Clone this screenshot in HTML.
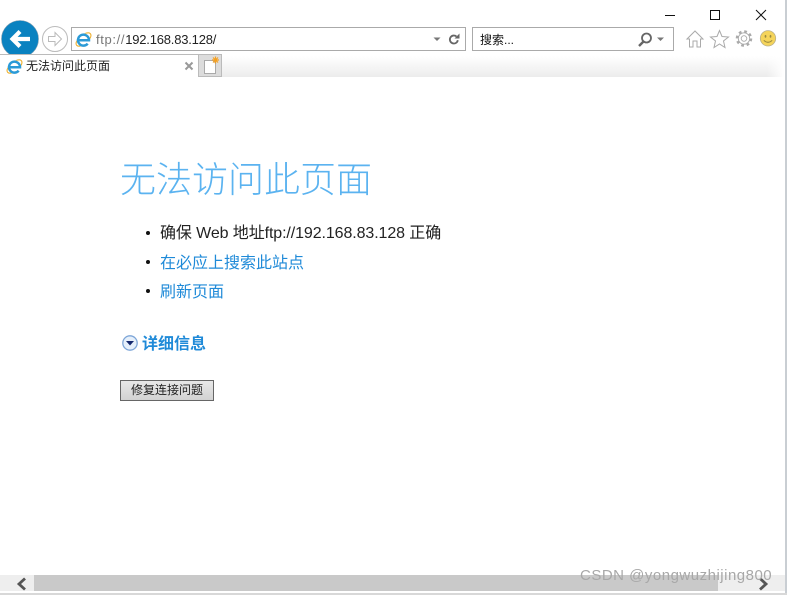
<!DOCTYPE html>
<html lang="zh">
<head>
<meta charset="utf-8">
<style>
html,body{margin:0;padding:0;background:#fff;}
body{width:787px;height:595px;position:relative;overflow:hidden;font-family:"Liberation Sans","Noto Sans CJK SC",sans-serif;}
.a{position:absolute;white-space:nowrap;line-height:1;}
.box{position:absolute;box-sizing:border-box;background:#fff;border:1px solid #aaa;}
svg{position:absolute;overflow:visible;}
</style>
</head>
<body>
<!-- window edge -->
<div class="a" style="left:785px;top:0;width:2px;height:595px;background:#c9ced3"></div>
<div class="a" style="left:0;top:593px;width:787px;height:2px;background:#d8d8d8"></div>

<!-- window controls -->
<svg style="left:660px;top:8px" width="115" height="14" viewBox="0 0 115 14">
<path d="M5 7.500H15" stroke="#111" stroke-width="1" fill="none"/>
<rect x="50.500" y="2.500" width="9" height="9" stroke="#111" fill="none"/>
<path d="M96 2L106 12M106 2L96 12" stroke="#111" stroke-width="1" fill="none"/>
</svg>

<!-- back button -->
<svg style="left:0;top:19px" width="70" height="38" viewBox="0 0 70 38">
<circle cx="20" cy="20" r="18.500" fill="#0a82c0" stroke="#7b9bb0" stroke-width=".6"/>
<path d="M30 20H13M20 12.500L12.500 20L20 27.500" stroke="#fff" stroke-width="4.200" fill="none"/>
<circle cx="55" cy="20" r="12.500" fill="#fff" stroke="#bbb" stroke-width="1"/>
<path d="M48.500 17.500H55V13.500L61.500 20L55 26.500V22.500H48.500Z" fill="none" stroke="#bbb" stroke-width="1"/>
</svg>

<!-- address bar -->
<div class="box" style="left:71px;top:27px;width:395px;height:24px"></div>
<svg style="left:75px;top:31px" width="17" height="17" viewBox="0 0 17 17">
<ellipse cx="8.500" cy="8.500" rx="9" ry="4.300" transform="rotate(-40 8.500 8.500)" fill="none" stroke="#eeb030" stroke-width="1.100"/>
<circle cx="8.500" cy="9" r="6.800" fill="#fff"/>
<path d="M3 9.300H14A5.500 5.500 0 1 0 12.700 12.700" stroke="#2b9ad6" stroke-width="2.500" fill="none"/>
</svg>
<div class="a" style="left:96px;top:33px;font-size:13px;color:#222;letter-spacing:-.2px"><span style="color:#777;letter-spacing:.65px">ftp://</span>192.168.83.128/</div>
<svg style="left:432px;top:32px" width="30" height="15" viewBox="0 0 30 15">
<path d="M1.500 5.500H8.500L5 9Z" fill="#777"/>
<path d="M25.800 8.200A4 4 0 1 1 24.500 4.500" stroke="#666" stroke-width="1.800" fill="none"/>
<path d="M22.500 6.500H27.500V1.500Z" fill="#666"/>
</svg>

<!-- search box -->
<div class="box" style="left:472px;top:27px;width:202px;height:24px"></div>
<div class="a" style="left:480px;top:34px;font-size:12px;color:#111">搜索...</div>
<svg style="left:637px;top:32px" width="30" height="15" viewBox="0 0 30 15">
<circle cx="9.500" cy="6" r="4.500" stroke="#666" stroke-width="1.800" fill="none"/>
<path d="M6.500 9.500L2 14" stroke="#666" stroke-width="2.400" fill="none"/>
<path d="M20 5.500H27L23.500 9Z" fill="#777"/>
</svg>

<!-- tool icons -->
<svg style="left:686px;top:29px" width="92" height="20" viewBox="0 0 92 20">
<path d="M1 10L9 2L17 10H14.500V18H11V12H7V18H3.500V10Z" fill="#fff" stroke="#aaa" stroke-width="1"/>
<path d="M33.500 1.500L36 7.500L42.500 8L37.500 12L39 18.500L33.500 15L28 18.500L29.500 12L24.500 8L31 7.500Z" fill="#fff" stroke="#aaa" stroke-width="1"/>
<circle cx="58" cy="9.500" r="7" fill="none" stroke="#aaa" stroke-width="2.500" stroke-dasharray="2.700 2.800"/>
<circle cx="58" cy="9.500" r="5.700" fill="#fff" stroke="#aaa" stroke-width=".9"/>
<circle cx="58" cy="9.500" r="2.800" fill="#fff" stroke="#aaa" stroke-width=".9"/>
<circle cx="82" cy="9.300" r="7.700" fill="#f5d45a" stroke="#b9b08a" stroke-width=".8"/>
<ellipse cx="79.500" cy="7.300" rx=".9" ry="1.400" fill="#9a8a40"/>
<ellipse cx="84.500" cy="7.300" rx=".9" ry="1.400" fill="#9a8a40"/>
<path d="M77.800 11.300Q82 15.300 86.200 11.300" stroke="#9a8a40" stroke-width="1" fill="none"/>
</svg>

<!-- tab row -->
<div class="a" style="left:222px;top:56px;width:562px;height:21px;background:linear-gradient(#fff,#ececec);-webkit-mask-image:linear-gradient(to right,#000 97%,transparent)"></div>
<div class="a" style="left:0;top:54px;width:199px;height:23px;background:#fff;border-top:1px solid #bbb;border-right:1px solid #bbb;box-sizing:border-box"></div>
<svg style="left:6px;top:58px" width="17" height="17" viewBox="0 0 17 17">
<ellipse cx="8.500" cy="8.500" rx="9" ry="4.300" transform="rotate(-40 8.500 8.500)" fill="none" stroke="#eeb030" stroke-width="1.100"/>
<circle cx="8.500" cy="9" r="6.800" fill="#fff"/>
<path d="M3 9.300H14A5.500 5.500 0 1 0 12.700 12.700" stroke="#2b9ad6" stroke-width="2.500" fill="none"/>
</svg>
<div class="a" style="left:26px;top:60px;font-size:12px;color:#222">无法访问此页面</div>
<svg style="left:184px;top:61px" width="10" height="10" viewBox="0 0 10 10"><path d="M1.500 1.500L8.500 8.500M8.500 1.500L1.500 8.500" stroke="#999" stroke-width="2" fill="none"/></svg>
<div class="a" style="left:199px;top:54px;width:23px;height:23px;background:#dcdcdc;border:1px solid #bbb;border-left:0;box-sizing:border-box"></div>
<svg style="left:203px;top:56px" width="17" height="19" viewBox="0 0 17 19">
<path d="M1.500 4.500H10L12.500 7V17.500H1.500Z" fill="#fff" stroke="#aaa"/>
<path d="M12.500 0.500V7.500M9 4H16M10 1.500L15 6.500M15 1.500L10 6.500" stroke="#f5a020" stroke-width="1.200"/>
</svg>

<!-- page content -->
<div class="a" style="left:120px;top:162px;font-size:36px;color:#5bb3f0;font-weight:300">无法访问此页面</div>

<div class="a" style="left:146px;top:231px;width:4px;height:4px;border-radius:50%;background:#111"></div>
<div class="a" style="left:160px;top:226px;font-size:16px;color:#222;letter-spacing:-.1px">确保 Web 地址ftp://192.168.83.128 正确</div>
<div class="a" style="left:146px;top:260px;width:4px;height:4px;border-radius:50%;background:#111"></div>
<div class="a" style="left:160px;top:256px;font-size:16px;color:#1f8ad8">在必应上搜索此站点</div>
<div class="a" style="left:146px;top:289px;width:4px;height:4px;border-radius:50%;background:#111"></div>
<div class="a" style="left:160px;top:285px;font-size:16px;color:#1f8ad8">刷新页面</div>

<svg style="left:122px;top:335px" width="17" height="17" viewBox="0 0 17 17">
<circle cx="8" cy="8" r="7.200" fill="#e6f0fb" stroke="#7ea6d8" stroke-width="1.300"/>
<path d="M4 6H12L8 10.500Z" fill="#14286e"/>
</svg>
<div class="a" style="left:142px;top:337px;font-size:16px;color:#1f8ad8;font-weight:bold">详细信息</div>

<div class="a" style="left:120px;top:380px;width:94px;height:21px;box-sizing:border-box;border:1px solid #666;background:linear-gradient(#e8e8e8,#d2d2d2);font-size:12px;color:#222;text-align:center;line-height:19px">修复连接问题</div>

<!-- scrollbar -->
<div class="a" style="left:0;top:575px;width:785px;height:16px;background:#eee"></div>
<div class="a" style="left:34px;top:575px;width:684px;height:16px;background:#c9c9c9"></div>
<svg style="left:0;top:575px" width="785" height="16" viewBox="0 0 785 16">
<path d="M25 3.500L19 9L25 14.500" stroke="#555" stroke-width="2.800" fill="none"/>
<path d="M760 3.500L766 9L760 14.500" stroke="#555" stroke-width="2.800" fill="none"/>
</svg>

<!-- watermark -->
<div class="a" style="left:580px;top:568px;font-size:15px;color:#a8a8a8;letter-spacing:.5px">CSDN @yongwuzhijing800</div>
</body>
</html>
